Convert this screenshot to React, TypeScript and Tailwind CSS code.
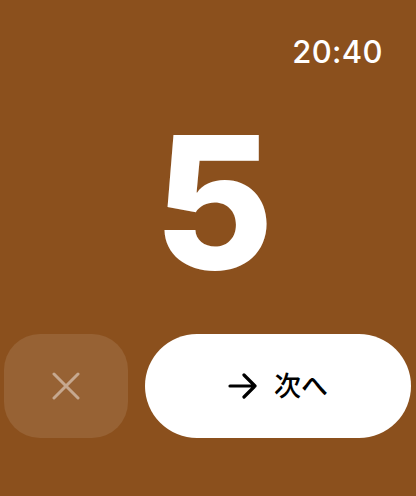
export default function App() {
  return (
    <div
      className="flex h-[496px] w-[416px] flex-col bg-[#8b501d] text-white"
      style={{ fontFamily: "Inter, 'Noto Sans CJK JP', sans-serif" }}
    >
      <div className="flex justify-end pr-[33px] pt-[34px]">
        <span className="text-[31px] font-medium leading-[36px] tracking-[0.4px]">20:40</span>
      </div>

      <div className="flex flex-1 items-center justify-center pl-[12px]">
        <span className="text-[184px] font-extrabold leading-none">5</span>
      </div>

      <div className="flex gap-[17px] pb-[58px] pl-[4px] pr-[5px]">
        <button className="flex h-[104px] w-[124px] items-center justify-center rounded-[36px] bg-white/10">
          {/* close */}
          <svg width="28" height="28" viewBox="0 0 28 28" className="text-white/45">
            <path d="M2 2 L26 26 M26 2 L2 26" stroke="currentColor" strokeWidth="3" strokeLinecap="round" />
          </svg>
        </button>
        <button className="flex h-[104px] flex-1 items-center justify-center gap-[16px] rounded-full bg-white text-black">
          <svg width="30" height="26" viewBox="0 0 30 26">
            <path
              d="M2 13 H27 M16 2 L27 13 L16 24"
              fill="none"
              stroke="currentColor"
              strokeWidth="3.2"
              strokeLinecap="round"
              strokeLinejoin="round"
            />
          </svg>
          <span className="text-[27px] font-medium leading-none">次へ</span>
        </button>
      </div>
    </div>
  );
}
